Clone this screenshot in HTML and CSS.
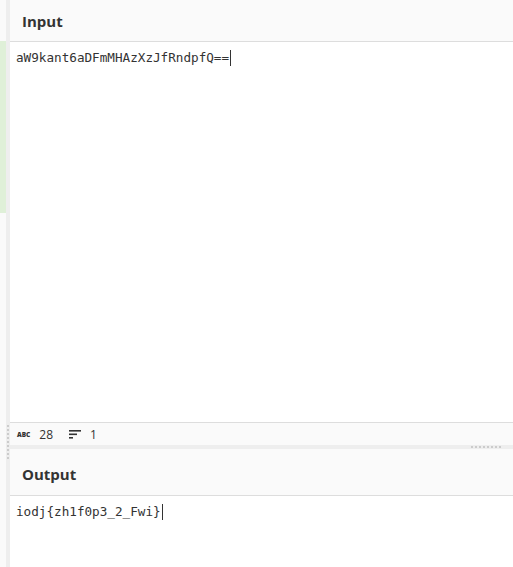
FILE: index.html
```html
<!DOCTYPE html>
<html lang="en">
  <head>
    <meta charset="UTF-8" />
    <meta name="viewport" content="width=device-width, initial-scale=1.0" />
    <title>CyberChef</title>
    <link rel="stylesheet" href="styles.css">
  </head>
  <body>
    <div class="main">
      <div class="recipe">
        <div class="recipe-head"></div>
        <div class="recipe-ok"></div>
      </div>
      <div class="gutter-v"><div class="grip-v"></div></div>
      <div class="io">
        <!-- input -->
        <div class="pane input">
          <div class="head">Input</div>
          <div class="text">aW9kant6aDFmMHAzXzJfRndpfQ==<span class="caret"></span></div>
          <div class="status">
            <span class="abc">ABC</span>
            <span class="num">28</span>
            <svg class="lines" width="12" height="10" viewBox="0 0 12 10">
              <rect x="0" y="1" width="12" height="1.6" fill="#333" />
              <rect x="0" y="4.5" width="8" height="1.6" fill="#333" />
              <rect x="0" y="8" width="4" height="1.6" fill="#333" />
            </svg>
            <span class="num">1</span>
          </div>
        </div>
        <div class="gutter-h"><div class="grip-h"></div></div>
        <!-- output -->
        <div class="pane output">
          <div class="head">Output</div>
          <div class="text">iodj{zh1f0p3_2_Fwi}<span class="caret"></span></div>
        </div>
      </div>
    </div>
  </body>
</html>
```

FILE: styles.css
```css
body {
  margin: 0;
  font-family: "Open Sans", "Noto Sans", sans-serif;
  color: #333;
}
.main {
  display: flex;
  height: 567px;
  overflow: hidden;
}
.recipe {
  width: 6px;
  background-color: #fafafa;
}
.recipe-head {
  height: 41px;
}
.recipe-ok {
  height: 172px;
  background-color: #dff0d8;
}
.gutter-v {
  width: 4px;
  background-color: #eee;
  padding-top: 425px;
}
.grip-v {
  margin-left: 1px;
  width: 2px;
  height: 34px;
  background: repeating-linear-gradient(#ccc 0 2px, transparent 2px 4px);
}
.io {
  flex: 1;
  display: flex;
  flex-direction: column;
}
.pane {
  display: flex;
  flex-direction: column;
  background-color: #fff;
}
.input {
  height: 445px;
}
.output {
  flex: 1;
}
.head {
  background-color: #fafafa;
  border-bottom: 1px solid #ddd;
  font-size: 15px;
  font-weight: 700;
  padding-left: 12px;
  color: #333;
  display: flex;
  align-items: center;
}
.input .head {
  height: 41px;
}
.output .head {
  height: 47px;
  padding-top: 4px;
  box-sizing: border-box;
}
.text {
  flex: 1;
  font-family: "DejaVu Sans Mono", "Liberation Mono", monospace;
  font-size: 12.65px;
  padding: 7px 6px;
  line-height: 17px;
  color: #333;
}
.caret {
  display: inline-block;
  width: 0;
  height: 16px;
  border-left: 1px solid #333;
  vertical-align: -4px;
  margin-left: 1px;
}
.status {
  height: 22px;
  background-color: #fafafa;
  border-top: 1px solid #ddd;
  display: flex;
  align-items: center;
  padding-left: 7px;
  font-size: 12px;
}
.abc {
  font-size: 6.5px;
  font-weight: 800;
  letter-spacing: 0;
  color: #333;
  margin-right: 9px;
}
.num {
  margin-right: 16px;
}
.lines {
  margin-right: 9px;
}
.gutter-h {
  height: 4px;
  background-color: #eee;
  display: flex;
  justify-content: flex-end;
  align-items: center;
}
.grip-h {
  width: 31px;
  height: 2px;
  margin-right: 11px;
  background: repeating-linear-gradient(90deg, #ccc 0 2px, transparent 2px 4px);
}
```
